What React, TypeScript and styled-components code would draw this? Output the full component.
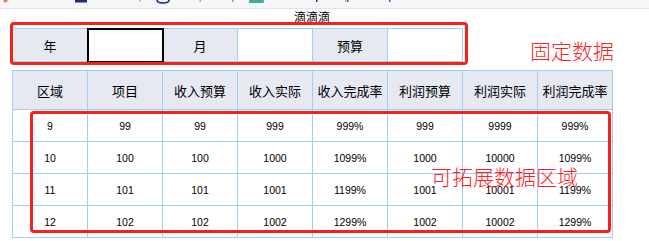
import styled, { createGlobalStyle } from "styled-components";

const GlobalStyle = createGlobalStyle`
  html, body {
    margin: 0;
    padding: 0;
    background: #ffffff;
  }
  body {
    font-family: "Noto Sans CJK SC", "Noto Sans", sans-serif;
    color: #000000;
  }
`;

const headers = [
  "区域",
  "项目",
  "收入预算",
  "收入实际",
  "收入完成率",
  "利润预算",
  "利润实际",
  "利润完成率",
];

const rows = [
  ["9", "99", "99", "999", "999%", "999", "9999", "999%"],
  ["10", "100", "100", "1000", "1099%", "1000", "10000", "1099%"],
  ["11", "101", "101", "1001", "1199%", "1001", "10001", "1199%"],
  ["12", "102", "102", "1002", "1299%", "1002", "10002", "1299%"],
];

const ToolbarIcons = (): JSX.Element => (
  <svg width="649" height="8" viewBox="0 0 649 8">
    <circle cx="5.5" cy="0.5" r="2" fill="#f07b3f" />
    <rect x="75" y="0" width="12" height="2.5" fill="#1f2a7a" />
    <rect x="139" y="0" width="1.5" height="1.5" fill="#c9a25c" />
    <path d="M157 0 Q157 3 163 3 Q169 3 169 0" fill="none" stroke="#1f2a7a" strokeWidth="1.6" />
    <rect x="199.5" y="0" width="1.5" height="2" fill="#e8a33a" />
    <rect x="232" y="0" width="1.5" height="2" fill="#d98b2f" />
    <rect x="249" y="0" width="15" height="3" rx="1" fill="#3fae98" />
    <rect x="316" y="0" width="1.5" height="2" fill="#1f2a7a" />
    <rect x="345" y="0" width="1.5" height="2" fill="#e8a33a" />
    <rect x="347" y="0" width="1.5" height="2" fill="#2a62c9" />
    <rect x="389" y="0" width="1.5" height="2" fill="#2a62c9" />
  </svg>
);

const App = (): JSX.Element => {
  return (
    <Page>
      <GlobalStyle />
      <TopBar>
        <ToolbarIcons />
      </TopBar>
      <Title>滴滴滴</Title>

      <FixedArea>
        <Grid $width={451}>
          <tbody>
            <tr>
              <Cell $head $height={32}>年</Cell>
              <Cell $height={32} $active />
              <Cell $head $height={32}>月</Cell>
              <Cell $height={32} />
              <Cell $head $height={32}>预算</Cell>
              <Cell $height={32} />
            </tr>
          </tbody>
        </Grid>
        <Frame $left={10} $top={-6} $width={458} $height={43} />
        <Note $left={530} $top={12}>固定数据</Note>
      </FixedArea>

      <DataArea>
        <Grid $width={601}>
          <thead>
            <tr>
              {headers.map((h) => (
                <Cell as="th" key={h} $head $height={38}>
                  {h}
                </Cell>
              ))}
            </tr>
          </thead>
          <tbody>
            {rows.map((r, i) => (
              <tr key={i}>
                {r.map((v, j) => (
                  <Cell key={j} $num $height={31}>
                    {v}
                  </Cell>
                ))}
              </tr>
            ))}
          </tbody>
        </Grid>
        <Frame $left={30} $top={41} $width={581} $height={122} />
        <Note $left={431} $top={96}>可拓展数据区域</Note>
      </DataArea>
    </Page>
  );
};

const Page = styled.div`
  width: 649px;
  height: 241px;
  overflow: hidden;
  background: #ffffff;
`;

const TopBar = styled.div`
  height: 8px;
  background: #f5f6f8;
  border-bottom: 1px solid #e2e4e8;
  overflow: hidden;

  svg {
    display: block;
  }
`;

const Title = styled.div`
  margin-top: 1px;
  padding-left: 294px;
  font-size: 12px;
  line-height: 14px;
  height: 14px;
  color: #000000;
`;

const FixedArea = styled.div`
  position: relative;
  margin-top: 4px;
  padding-left: 12px;
`;

const DataArea = styled.div`
  position: relative;
  margin-top: 8px;
  padding-left: 12px;
`;

const Grid = styled.table<{ $width: number }>`
  border-collapse: collapse;
  table-layout: fixed;
  width: ${(p) => p.$width}px;
`;

const Cell = styled.td<{
  $head?: boolean;
  $num?: boolean;
  $active?: boolean;
  $height: number;
}>`
  height: ${(p) => p.$height}px;
  padding: 0;
  border: 1px solid #a3cdf5;
  background: ${(p) => (p.$head ? "#e6e9f1" : "#ffffff")};
  text-align: center;
  vertical-align: middle;
  font-weight: 400;
  color: #000000;
  font-family: ${(p) =>
    p.$num
      ? '"Liberation Sans", Arial, sans-serif'
      : '"Noto Sans CJK SC", "Noto Sans", sans-serif'};
  font-size: ${(p) => (p.$num ? "10.5px" : "13px")};
  outline: ${(p) => (p.$active ? "2px solid #000000" : "none")};
  outline-offset: -1px;
`;

const Frame = styled.div<{
  $left: number;
  $top: number;
  $width: number;
  $height: number;
}>`
  position: absolute;
  left: ${(p) => p.$left}px;
  top: ${(p) => p.$top}px;
  width: ${(p) => p.$width}px;
  height: ${(p) => p.$height}px;
  box-sizing: border-box;
  border: 3px solid #f5211a;
  border-radius: 4px;
  pointer-events: none;
`;

const Note = styled.div<{ $left: number; $top: number }>`
  position: absolute;
  left: ${(p) => p.$left}px;
  top: ${(p) => p.$top}px;
  font-family: "Noto Sans CJK SC", "Noto Sans", sans-serif;
  font-size: 21px;
  font-weight: 300;
  line-height: 21px;
  color: #ff1f1f;
  white-space: nowrap;
`;

export default App;
